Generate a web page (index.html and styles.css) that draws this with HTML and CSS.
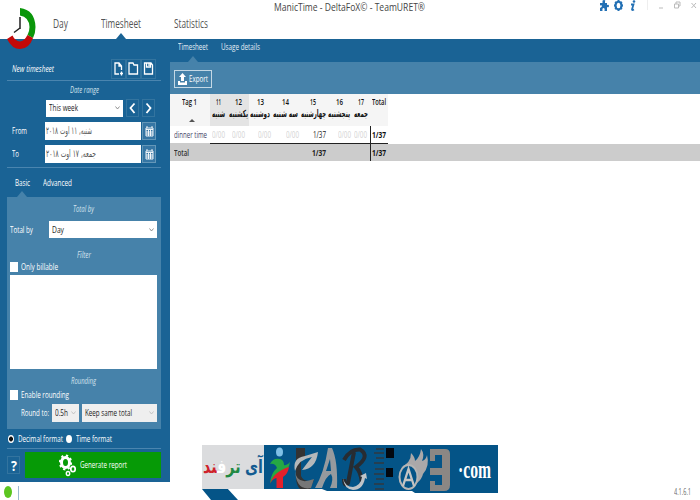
FILE: index.html
```html
<!DOCTYPE html>
<html lang="en">
<head>
<meta charset="utf-8">
<title>ManicTime</title>
<link rel="stylesheet" href="styles.css">
</head>
<body>
<div class="window">
  <header class="top">
    <svg class="logo" viewBox="0 0 30 43" width="30" height="43">
      <path d="M13 1 Q28 3 28.500 20 Q28.500 26 26 31 L20.500 28 Q22.500 24 22.500 20 Q22 10 13 8.500Z" fill="#0a960a"/>
      <path d="M0 32 Q5 42 13 42 Q22 42 26 31 L20.500 28 Q17 34.500 13 34.500 Q8 34 5.500 28.500Z" fill="#c40808"/>
      <path d="M13 10V22M13 21L7 25.500" fill="none" stroke="#222" stroke-width="1.500"/>
    </svg>
    <nav class="nav">
      <a><span data-w="15">Day</span></a>
      <a class="on"><span data-w="40">Timesheet</span></a>
      <a><span data-w="34">Statistics</span></a>
    </nav>
    <div class="title"><span data-w="151">ManicTime - DeltaFoX© - TeamURET®</span></div>
    <div class="sys">
      <svg viewBox="0 0 102 12" width="102" height="12">
        <path d="M1 3h2.500V1.500Q3 0 5 0T6 1.500V3H8V5Q10 4 10 6T8 7V11H5.500Q6 8 4.500 8T3.500 11H1V8Q3 7 3 6T1 5.500Z" fill="#2370b4"/>
        <ellipse cx="19.500" cy="5.500" rx="3" ry="3.800" fill="none" stroke="#2370b4" stroke-width="2.200"/>
        <path d="M19.500 0V2M19.500 9V11M15 5.500h1.500M22.500 5.500H24M16 2l1.500 1M23 2l-1.500 1M16 9l1.500-1M23 9l-1.500-1" stroke="#2370b4" stroke-width="1.800"/>
        <path d="M32 4.500h2.500L33 9.500Q33 10.500 35 9.500" fill="none" stroke="#2370b4" stroke-width="1.800"/>
        <circle cx="35" cy="1.500" r="1.300" fill="#2370b4"/>
        <path d="M48.500 0V10" stroke="#eee"/>
        <path d="M60 8h4M75.500 4h4v4h-4zM77 4V2h4v4h-1.500M92.500 3l4.500 5M97 3l-4.500 5" fill="none" stroke="#bbb"/>
      </svg>
    </div>
  </header>

  <div class="body">
    <aside class="side">
      <div class="head">
        <i><span data-w="42">New timesheet</span></i>
        <div class="tools">
          <b class="ib"><svg viewBox="0 0 15 18" width="15" height="18"><path d="M8 14H4V3H8L10.500 6V10M8 3V6H10.500M10.500 11.500V15.500M9 13.500H12" /></svg></b>
          <b class="ib"><svg viewBox="0 0 15 18" width="15" height="18"><path d="M3 14V3H7L8 5H11.500V14Z"/></svg></b>
          <b class="ib"><svg viewBox="0 0 15 18" width="15" height="18"><path d="M3.500 14V3H10L11.500 5V14ZM5.500 3V7H9.500V3M8 3V6"/></svg></b>
        </div>
      </div>
      <div class="cap range"><span data-w="29">Date range</span></div>
      <div class="week">
        <div class="select w77"><span data-w="29">This week</span><svg class="chev" viewBox="0 0 5 4" width="5" height="4"><path d="M.5.500L2.500 3L4.500.500"/></svg></div>
        <b class="arrow"><svg viewBox="0 0 13 18" width="13" height="18"><path d="M8.500 4.500L4.500 9L8.500 14"/></svg></b>
        <b class="arrow"><svg viewBox="0 0 13 18" width="13" height="18"><path d="M4.500 4.500L8.500 9L4.500 14"/></svg></b>
      </div>
      <div class="date">
        <label><span data-w="15">From</span></label>
        <div class="input" lang="fa"><span dir="rtl" data-w="46">شنبه, ۱۱ اوت ۲۰۱۸</span></div>
        <b class="cal"><svg viewBox="0 0 13 17" width="13" height="17"><path d="M3 5h7v8H3zM3 6.500h7M4 3v2M9 3v2M3 9h7M3 11h7M5.500 7v6M7.500 7v6"/></svg></b>
      </div>
      <div class="date">
        <label><span data-w="7">To</span></label>
        <div class="input" lang="fa"><span dir="rtl" data-w="50">جمعه, ۱۷ اوت ۲۰۱۸</span></div>
        <b class="cal"><svg viewBox="0 0 13 17" width="13" height="17"><path d="M3 5h7v8H3zM3 6.500h7M4 3v2M9 3v2M3 9h7M3 11h7M5.500 7v6M7.500 7v6"/></svg></b>
      </div>
      <div class="tabs">
        <a class="on"><span data-w="15">Basic</span></a>
        <a><span data-w="29">Advanced</span></a>
      </div>
      <section class="panel">
        <div class="cap c1"><span data-w="21">Total by</span></div>
        <div class="total"><label><span data-w="23">Total by</span></label>
          <div class="select w108"><span data-w="12">Day</span><svg class="chev" viewBox="0 0 5 4" width="5" height="4"><path d="M.5.500L2.500 3L4.500.500"/></svg></div></div>
        <div class="cap c2"><span data-w="14">Filter</span></div>
        <div class="check"><i></i><span data-w="37">Only billable</span></div>
        <div class="list"></div>
        <div class="cap c3"><span data-w="25">Rounding</span></div>
        <div class="check"><i></i><span data-w="48">Enable rounding</span></div>
        <div class="round"><label><span data-w="28">Round to:</span></label>
          <div class="select off w27"><span data-w="13">0.5h</span><svg class="chev" viewBox="0 0 5 4" width="5" height="4"><path d="M.5.500L2.500 3L4.500.500"/></svg></div>
          <div class="select off w75"><span data-w="47">Keep same total</span><svg class="chev" viewBox="0 0 5 4" width="5" height="4"><path d="M.5.500L2.500 3L4.500.500"/></svg></div></div>
      </section>
      <div class="format">
        <i class="sel"></i><span data-w="45">Decimal format</span>
        <i></i><span data-w="36">Time format</span>
      </div>
      <div class="actions">
        <b class="help"><span data-w="6">?</span></b>
        <div class="go">
          <svg viewBox="0 0 18 23" width="18" height="23">
            <g fill="none" stroke="#fff"><ellipse cx="6.500" cy="8.500" rx="4" ry="5" stroke-width="3"/>
            <ellipse cx="6.500" cy="8.500" rx="5.600" ry="7.100" stroke-width="2" stroke-dasharray="2.300 2.700"/>
            <ellipse cx="14" cy="15" rx="2.200" ry="2.700" stroke-width="1.700"/><ellipse cx="9" cy="19.500" rx="1.700" ry="2" stroke-width="1.400"/></g>
          </svg>
          <span data-w="47">Generate report</span>
        </div>
      </div>
    </aside>

    <main class="main">
      <div class="subtabs">
        <a class="on"><span data-w="30">Timesheet</span></a>
        <a><span data-w="39">Usage details</span></a>
      </div>
      <div class="bar">
        <div class="export">
          <svg viewBox="0 0 9 12" width="9" height="12"><path d="M4.500 0L8 4H6V8H3V4H1ZM0 8H2V9.500H7V8H9V12H0Z" fill="#fff"/></svg>
          <span data-w="19">Export</span>
        </div>
      </div>
      <div class="grid hd">
        <div class="tag"><span data-w="15">Tag 1</span><em></em></div>
        <div class="g"><span data-w="5">11</span><span class="fa" data-w="13">شنبه</span></div>
        <div class="g"><span data-w="7">12</span><span class="fa" data-w="19">یکشنبه</span></div>
        <div><span data-w="7">13</span><span class="fa" data-w="20">دوشنبه</span></div>
        <div><span data-w="7">14</span><span class="fa" data-w="25">سه شنبه</span></div>
        <div><span data-w="6">15</span><span class="fa" data-w="25">چهارشنبه</span></div>
        <div><span data-w="7">16</span><span class="fa" data-w="22">پنجشنبه</span></div>
        <div><span data-w="6">17</span><span class="fa" data-w="14">جمعه</span></div>
        <div><span data-w="14">Total</span></div>
      </div>
      <div class="grid row">
        <div class="name"><span data-w="33">dinner time</span></div>
        <div class="z"><span data-w="13">0/00</span></div><div class="z"><span data-w="13">0/00</span></div>
        <div class="z r"><span data-w="13">0/00</span></div><div class="z r"><span data-w="13">0/00</span></div>
        <div class="r"><span data-w="13">1/37</span></div>
        <div class="z r"><span data-w="13">0/00</span></div><div class="z"><span data-w="13">0/00</span></div>
        <div class="sum"><span data-w="14">1/37</span></div>
      </div>
      <div class="grid row foot">
        <div class="name"><span data-w="15">Total</span></div>
        <div></div><div></div><div></div><div></div>
        <div class="r"><span data-w="14">1/37</span></div>
        <div></div><div></div>
        <div class="sum"><span data-w="14">1/37</span></div>
      </div>
    </main>
  </div>

  <footer class="status"><i></i><s></s><div><span data-w="17">4.1.6.1</span></div></footer>

  <div class="banner">
    <div class="fa-name" dir="rtl"><span data-w="60"><b class="bl">آی</b> <b class="gr">تر</b><b class="wh">ف</b><b class="rd">ند</b></span></div>
    <div class="art">
      <svg viewBox="0 0 192 48" width="192" height="48">
        <ellipse cx="15.500" cy="7" rx="3.500" ry="4.500" fill="#7fc0e6"/>
        <path d="M6 19Q9 12.500 16 14Q20 15 20 20Q23 21 26 17Q25 25 18 28Q12 30 6 38Q7 28 13 23Q11 18 6 19Z" fill="#25a843"/>
        <path d="M6 39Q9 27 25 22Q24 29 19 32V43H12.500V33Q8 34 6 39Z" fill="#e3202b"/>
        <path d="M32 3H41V12L37 17V31Q40 38 50 35L46 44H36Q32 40 32 32Z" fill="#333"/>
        <path d="M31 26Q28 13 41 11L54 7Q52 24 38 25Q44 17 48 12Q35 14 31 26Z" fill="#b4b8ba"/>
        <path d="M31 25Q32 41 50 34L47 43Q32 46 31 25Z" fill="#777"/>
        <path d="M51 43Q60 28 64 3H68Q74 16 73 43H66Q70 34 67 29Q62 31 58 43ZM62 26H67L66 14Z" fill="#969a9e" fill-rule="evenodd"/>
        <path d="M80 15Q86 4 96 4.500Q107 11 92 22Q97 27 98 38M90 7L84 38Q80 42 80 34" fill="none" stroke="#272c32" stroke-width="4"/>
        <path d="M79 33Q81 42 89 42Q97 40 98 32L96 31L102 28L103 34L101 33Q99 45 89 45Q80 44 79 33Z" fill="#bfc4c8"/>
        <path d="M112 4h8M110 8h10M112 13h8M110 18h10M111 24h9M110 29h10M112 34h8M110 39h10M111 44h9" stroke="#303840" stroke-width="1.500"/>
        <path d="M122 3h8v10h-8zM122 23h7v9h-7z" fill="#020810"/>
        <path d="M137 22Q147 18 147 8Q151 12 151 16Q156 12 157 4Q161 9 158 16Q162 15 163 10Q166 21 159 29Q158 34 153 38Q156 26 148 22Q142 19 137 22Z" fill="#aaa8a9"/>
        <ellipse cx="144.500" cy="32" rx="9" ry="12" fill="#045487" stroke="#b5b5b5" stroke-width="2"/>
        <path d="M139 41L144.500 24L150 41M141 35h7" fill="none" stroke="#c4c4c4" stroke-width="2.300"/>
        <path d="M166 4H181Q186 4 186 9V40Q186 46 180 46H166V36H171V40H178V30H166V23H178V10H171V16H166Z" fill="#8b8784"/>
      </svg>
      <div class="com"><span data-w="33">·com</span></div>
    </div>
    <div class="tail"></div>
  </div>
</div>
<script src="fit.js"></script>
</body>
</html>
```
FILE: styles.css
```css
* { box-sizing: border-box; }
body { margin: 0; background: #fff; font-family: "Open Sans", "Noto Sans", "DejaVu Sans", sans-serif; font-size: 9.5px; line-height: 12px; }
[data-w] { display: inline-block; white-space: nowrap; flex: none; transform-origin: 0 50%; }
svg { display: block; flex: none; }
.window { position: relative; width: 700px; height: 500px; display: flex; flex-direction: column; overflow: hidden; }
.top { height: 39px; display: flex; position: relative; }
.logo { position: absolute; left: 7px; top: 7px; z-index: 3; }
.nav { display: flex; gap: 33px; padding-left: 53px; width: 274px; color: #555; font-size: 12px; line-height: 16px; padding-top: 16px; }
.nav a { position: relative; }
.nav .on::after { content: ""; position: absolute; left: 15px; top: 17px; border: 5px solid transparent; border-top: 0; border-bottom: 6px solid #1a6395; }
.title { font-size: 11.5px; line-height: 13px; color: #444; width: 325px; }
.sys { width: 101px; }
.body { height: 443px; display: flex; background: #1a6395; }

.side { width: 170px; padding: 18px 9px 0 7px; color: #fff; }
.head { height: 24px; display: flex; justify-content: space-between; align-items: center; padding: 0 5px 0 5px; border-bottom: 1px solid #4a85af; }
.tools { display: flex; }
.ib, .arrow, .cal { border: 1px solid #33749f; display: flex; justify-content: center; align-items: center; }
.ib { width: 15px; height: 20px; }
.ib svg, .arrow svg, .cal svg { fill: none; stroke: #fff; stroke-width: 1.300; }
.cap { text-align: center; font-style: italic; font-size: 9px; color: #d4e3ee; }
.range { margin-top: 3px; }
.week { display: flex; gap: 3px; margin: 3px 0 5px 39px; align-items: center; height: 18px; }
.select { height: 17px; background: #fff; color: #222; display: flex; align-items: center; justify-content: space-between; padding: 0 3px; border: 0; }
.chev { fill: none; stroke: #777; stroke-width: .8; }
.w77 { width: 77px; } .w108 { width: 108px; } .w27 { width: 27px; } .w75 { width: 75px; }
.off { background: #efefef; height: 18px; }
.off .chev { stroke: #bbb; }
.arrow { width: 13px; height: 18px; }
.arrow svg { stroke-width: 1.800; }
.date { display: flex; height: 18px; margin-top: 4px; align-items: center; }
.date + .date { margin-top: 5px; }
.date label { width: 38px; padding-left: 5px; }
.input { width: 96px; height: 18px; background: #fff; color: #555; padding: 3px 0 0 1px; font-family: "DejaVu Sans", sans-serif; font-size: 10px; }
.cal { width: 14px; height: 18px; margin-left: 1px; background: #3676a4; border-color: #6497b8; }
.cal svg { stroke-width: .9; }
.tabs { margin-top: 4px; border-top: 1px solid #4a85af; height: 30px; display: flex; gap: 13px; padding: 9px 0 0 8px; }
.tabs a { position: relative; }
.tabs .on::after { content: ""; position: absolute; left: 2px; top: 14px; border: 5px solid transparent; border-top: 0; border-bottom: 6px solid #4682aa; }
.panel { background: #4682aa; height: 232px; padding: 6px 4px 0 3px; }
.total { display: flex; justify-content: space-between; align-items: center; margin-top: 6px; height: 17px; }
.c2 { margin-top: 11px; }
.check { display: flex; gap: 3px; align-items: center; height: 12px; }
.check i { width: 8px; height: 10px; background: #fff; }
.list { height: 94px; background: #fff; margin-top: 2px; }
.c3 { margin-top: 6px; margin-bottom: 2px; }
.round { display: flex; gap: 3px; align-items: center; margin-top: 3px; padding-left: 11px; }
.format { display: flex; align-items: center; height: 20px; border-bottom: 1px solid #4a85af; }
.format i { width: 6px; height: 8px; border-radius: 50%; background: #fff; margin: 0 4px 0 3px; }
.format i.sel { margin: 0 4px 0 1px; background: radial-gradient(ellipse, #111 38%, #fff 50%); }
.actions { display: flex; gap: 5px; margin-top: 3px; height: 26px; align-items: center; }
.help { width: 13px; height: 18px; border: 1px solid #33749f; font-size: 15px; line-height: 16px; padding-left: 3px; }
.go { width: 136px; height: 26px; background: #069a06; display: flex; gap: 3px; align-items: center; padding-left: 34px; }

.main { width: 530px; background: #fff; }
.subtabs { height: 23px; background: #1a6395; color: #fff; display: flex; gap: 13px; padding: 2px 8px; }
.subtabs a { position: relative; color: #e5eef5; }
.subtabs .on::after { content: ""; position: absolute; left: 10px; top: 15px; border: 5px solid transparent; border-top: 0; border-bottom: 6px solid #4682aa; }
.bar { height: 32px; background: #4682aa; padding: 8px 4px; }
.export { width: 38px; height: 18px; border: 1px solid #c4d8e5; color: #fff; display: flex; align-items: center; padding-left: 3px; gap: 2px; }
.grid { display: grid; grid-template-columns: 40px 18px 21px 23px 28px 27px 25px 18px 18px; }
.hd { height: 32px; width: 218px; background: #f5f5f5; color: #111; font-size: 9px; font-weight: 600; }
.hd > div { display: flex; flex-direction: column; align-items: center; padding-top: 2px; padding-right: 1px; }
.hd .g { background: #e4e4e4; }
.hd .fa { font-family: "DejaVu Sans", sans-serif; font-size: 10px; font-weight: bold; }
.hd .tag em { margin-top: 11px; margin-left: 5px; border: 3px solid transparent; border-top: 0; border-bottom: 3px solid #555; }
.row { height: 18px; color: #222; }
.row > div { display: flex; justify-content: center; align-items: center; border-bottom: 1px solid #222; padding-right: 1px; }
.row > .name { justify-content: flex-start; padding-left: 4px; color: #446; border-bottom: 1px solid #ccc; }
.row > .r { justify-content: flex-end; padding-right: 1px; }
.row .z { color: #d2d2d2; }
.row > .sum { border-left: 1px solid #222; font-weight: bold; color: #111; justify-content: flex-start; padding-left: 1px; }
.foot { background: #ccc; height: 17px; font-weight: bold; }
.row.foot > div { border-bottom: 0; }
.row.foot > .name { color: #333; font-weight: 600; }

.status { height: 18px; display: flex; align-items: flex-start; padding: 4px 9px 0 4px; color: #666; font-size: 8.5px; }
.status i { width: 8px; height: 12px; border-radius: 50%; background: #5cc620; }
.status s { width: 1px; height: 14px; background: #9bb9d0; margin-left: 6px; }
.status div { margin-left: auto; }

.banner { position: absolute; left: 202px; top: 445px; width: 296px; height: 55px; display: grid; grid-template-columns: 62px 234px; grid-template-rows: 44px 11px; }
.fa-name { background: #dbdcde; font-family: "DejaVu Sans", sans-serif; font-size: 19px; line-height: 42px; direction: ltr; padding-left: 1px; }
.fa-name span { direction: rtl; }
.bl { color: #135b91; } .gr { color: #218943; } .wh { color: #fff; } .rd { color: #cf222b; }
.art { background: #045487; height: 48px; display: flex; clip-path: polygon(0 0, 100% 0, 100% 100%, 151px 100%, 148px 46px, 63px 46px, 58px 44px, 0 44px); }
.com { color: #fff; font: bold 25px/50px "Liberation Serif", serif; padding-left: 2px; }
.tail { background: #045487; width: 36px; height: 11px; clip-path: polygon(0 0, 72% 0, 100% 100%, 25% 100%); }
```
FILE: fit.js
```js
// Condense each label horizontally to its assigned width.
document.querySelectorAll('[data-w]').forEach(function (el) {
  var natural = el.getBoundingClientRect().width;
  var w = parseFloat(el.dataset.w);
  el.style.width = natural + 'px';
  el.style.marginRight = (w - natural) + 'px';
  el.style.transform = 'scaleX(' + w / natural + ')';
});
```
